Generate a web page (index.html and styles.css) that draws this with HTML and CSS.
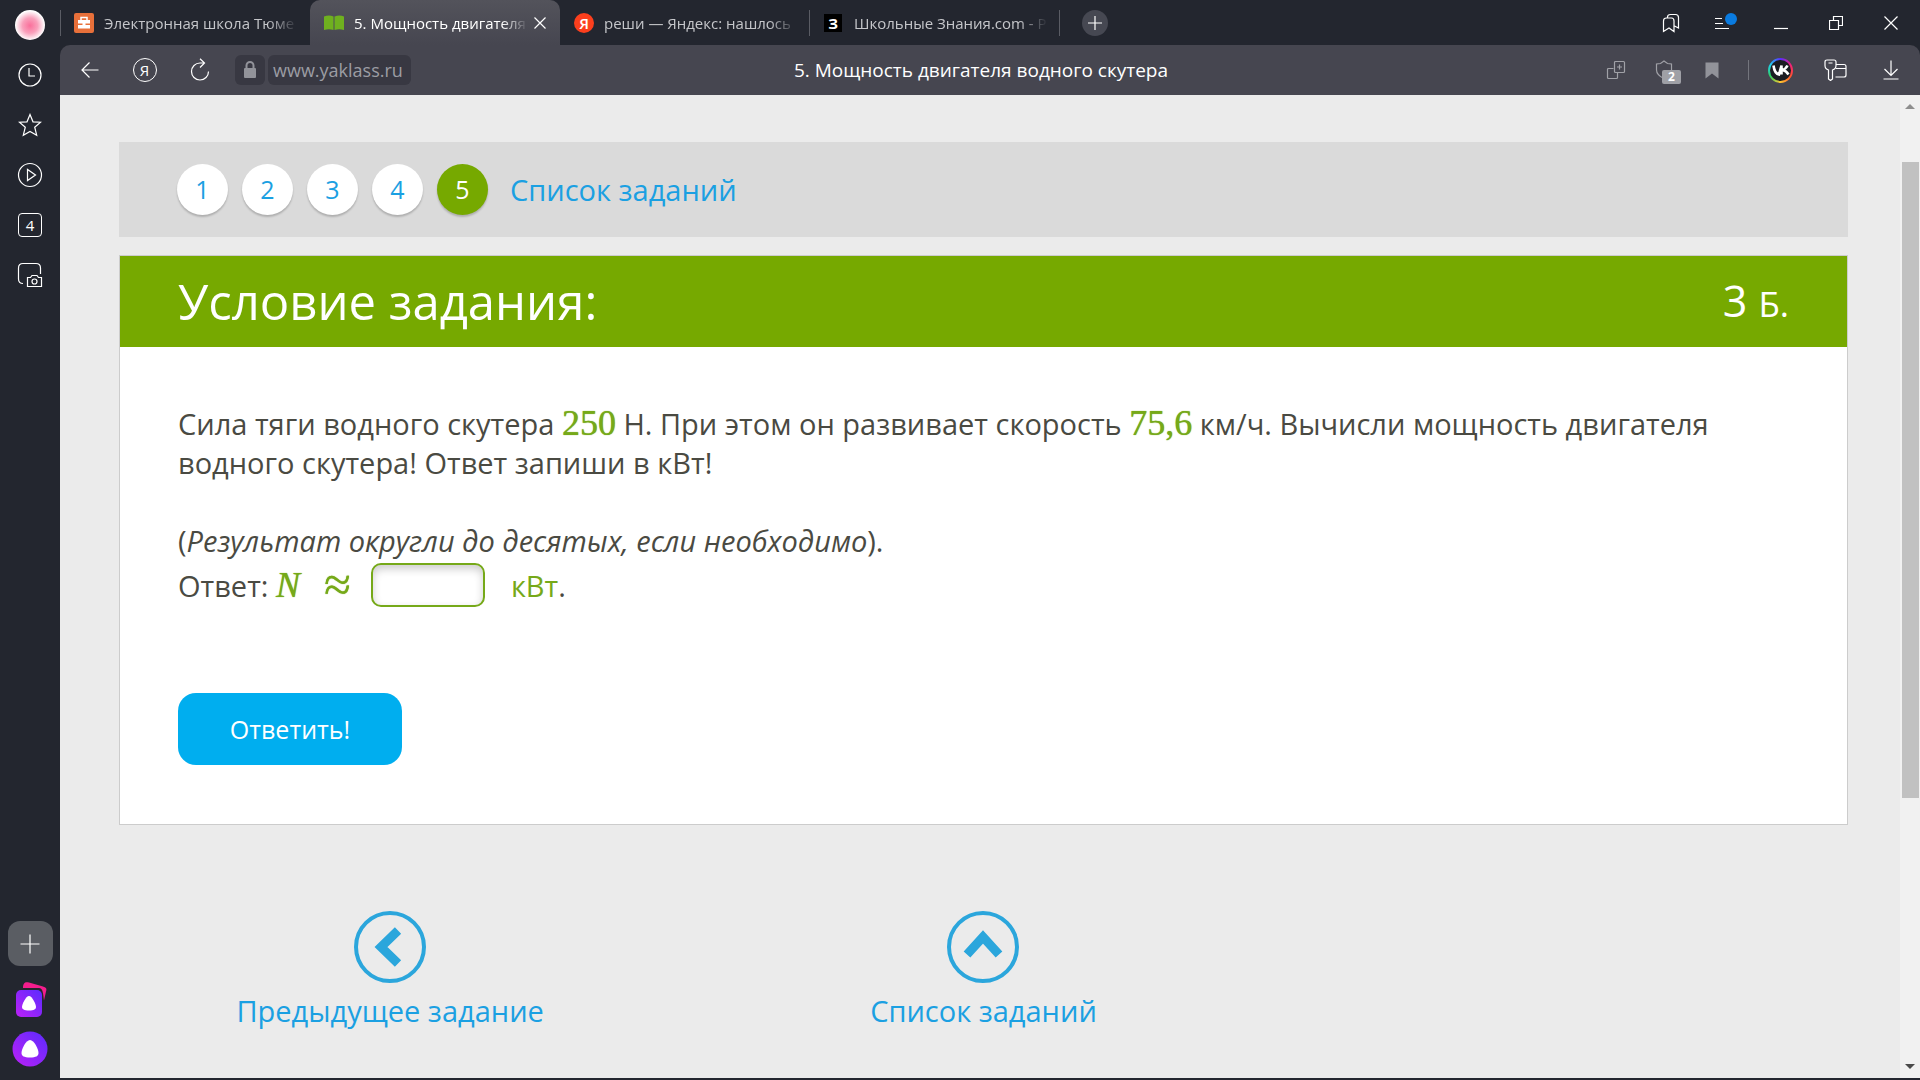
FILE: index.html
```html
<!DOCTYPE html>
<html lang="ru">
<head>
    <title>5. Мощность двигателя водного скутера</title>
    <meta charset="UTF-8">
    <meta name="viewport" content="width=device-width, initial-scale=1.0">
    <link rel="stylesheet" href="styles.css">
</head>
<body>
    <!-- боковая панель -->
    <aside class="sidebar">
        <button class="side-btn" aria-label="Профиль"><span class="avatar"></span></button>
        <button class="side-btn" aria-label="История">
            <svg width="24" height="24" viewBox="0 0 24 24"><circle cx="12" cy="12" r="11"/><path d="M11 5v8h6"/></svg>
        </button>
        <button class="side-btn" aria-label="Избранное">
            <svg width="24" height="24" viewBox="0 0 24 24"><path d="M12 1.5l3 7.3 7.6.4-5.9 5 2 8-6.7-3.7-6.7 3.7 2-8-5.9-5 7.6-.4z"/></svg>
        </button>
        <button class="side-btn" aria-label="Видео">
            <svg width="26" height="26" viewBox="0 0 26 26"><circle cx="13" cy="13" r="11.5"/><path d="M10.5 7.5v11l8-5.5z"/></svg>
        </button>
        <button class="side-btn" aria-label="Вкладки"><span class="tab-count">4</span></button>
        <button class="side-btn" aria-label="Снимок экрана">
            <svg width="26" height="26" viewBox="0 0 26 26"><path d="M6 21.5C3 21.5 1.500 20 1.500 17V6C1.500 3 3 1.500 6 1.500h13C22 1.500 23.500 3 23.500 6v6"/><path d="M10.500 15.500h3l1.500-2h5l1.500 2h3v9h-14z"/><circle cx="17.500" cy="19.500" r="2.500"/></svg>
        </button>
        <span class="spacer"></span>
        <button class="side-add" aria-label="Добавить">
            <svg width="20" height="20" viewBox="0 0 20 20"><path d="M10 .5v19M.5 10h19"/></svg>
        </button>
        <button class="side-btn" aria-label="Коллекции">
            <svg class="filled" width="34" height="38" viewBox="0 0 34 38">
                <defs><linearGradient id="violet" x1="1" y1="0" x2="0" y2="1"><stop offset="0" stop-color="#5a2bff"/><stop offset="1" stop-color="#bc20f5"/></linearGradient></defs>
                <path d="M10 8c0-5 2-6.500 6-5.500l14 4c3 1 4 2 3 5l-2 9c-1-8-1-12-5-12.500z" fill="#f51d8d"/>
                <rect x="3" y="10" width="26" height="27" rx="5" fill="url(#violet)"/>
                <path d="M16 16c3 0 7 8 7 11 0 2-2 3.500-7 3.500S9 29 9 27c0-3 4-11 7-11z" fill="#fff"/>
            </svg>
        </button>
        <button class="side-btn" aria-label="Алиса">
            <svg class="filled" width="36" height="36" viewBox="0 0 36 36"><circle cx="18" cy="18" r="17.500" fill="url(#violet)"/><path d="M18 9c4 0 8.500 9 8.500 13 0 3-2.500 4.500-8.500 4.500S9.500 25 9.500 22C9.500 18 14 9 18 9z" fill="#fff"/></svg>
        </button>
    </aside>

    <div class="browser">
        <!-- вкладки -->
        <header class="tabs">
            <a class="tab" href="#">
                <svg width="20" height="20" viewBox="0 0 20 20"><rect width="20" height="20" rx="2" fill="#e8703a"/><path d="M7 7V4.500h6V7" fill="none" stroke="#fff" stroke-width="1.500"/><path d="M4 7h12v3.500H4zM4 12h12v3.500H4zM8.500 10h3v3h-3z" fill="#fff"/></svg>
                <span class="tab-text">Электронная школа Тюме</span>
            </a>
            <a class="tab active" href="#">
                <svg width="20" height="16" viewBox="0 0 20 16"><path d="M0 1.500q5-2 9.500 0V15Q5 13.500 0 15zM10.500 1.500q5-2 9.500 0V15q-5-1.500-9.500 0z" fill="#6fb01f"/></svg>
                <span class="tab-text">5. Мощность двигателя</span>
                <svg class="tab-close" width="12" height="12" viewBox="0 0 12 12"><path d="M.5.5l11 11M11.500.5l-11 11"/></svg>
            </a>
            <a class="tab" href="#">
                <span class="fav-ya">Я</span>
                <span class="tab-text">реши — Яндекс: нашлось</span>
            </a>
            <a class="tab" href="#">
                <span class="fav-zn">З</span>
                <span class="tab-text">Школьные Знания.com - Р</span>
            </a>
            <button class="tab-new" aria-label="Новая вкладка">
                <svg width="14" height="14" viewBox="0 0 14 14"><path d="M7 0v14M0 7h14"/></svg>
            </button>
            <span class="spacer"></span>
            <button class="win-btn" aria-label="Закладки">
                <svg width="18" height="20" viewBox="0 0 18 20"><path d="M1.500 18.500V8q0-3 3-3h5q2.500 0 2.500 3v10.500l-5-3.500zM5.500 5V4q0-2.500 3-2.500h5q3 0 3 3V15l-4-2"/></svg>
            </button>
            <button class="win-btn" aria-label="Меню">
                <svg width="24" height="22" viewBox="0 0 24 22"><path d="M1 6.500h7M1 11.500h8M1 16.500h14"/><circle cx="17" cy="7" r="6" fill="#0a7be0" stroke="none"/></svg>
            </button>
            <button class="win-btn" aria-label="Свернуть">
                <svg width="14" height="14" viewBox="0 0 14 14"><path d="M0 12.500h14"/></svg>
            </button>
            <button class="win-btn" aria-label="Развернуть">
                <svg width="14" height="14" viewBox="0 0 14 14"><path d="M.5 4.500h9v9h-9zM4.500 4.500v-4h9v9h-4"/></svg>
            </button>
            <button class="win-btn" aria-label="Закрыть">
                <svg width="14" height="14" viewBox="0 0 14 14"><path d="M.5.5l13 13M13.500.5l-13 13"/></svg>
            </button>
        </header>

        <!-- адресная строка -->
        <div class="toolbar">
            <div class="tools-left">
                <button class="tool-btn" aria-label="Назад">
                    <svg width="18" height="16" viewBox="0 0 18 16"><path d="M17.500 8H1M8.500.5L1 8l7.500 7.500"/></svg>
                </button>
                <button class="tool-btn" aria-label="Яндекс"><span class="ya-round">Я</span></button>
                <button class="tool-btn" aria-label="Обновить">
                    <svg width="20" height="24" viewBox="0 0 20 24"><path d="M13.500 5H10a8.500 8.500 0 1 0 8.500 8.500M10 .8L14.500 5 10 9.500"/></svg>
                </button>
                <span class="lock">
                    <svg width="14" height="18" viewBox="0 0 14 18"><path class="lock-arc" d="M3.500 8V4.500a3.500 3.500 0 0 1 7 0V8"/><rect x="1" y="7" width="12" height="10" rx="1" fill="#92939a"/></svg>
                </span>
                <a class="url" href="#">www.yaklass.ru</a>
            </div>
            <div class="page-title">5. Мощность двигателя водного скутера</div>
            <div class="tools-right">
                <button class="ext-btn dim" aria-label="Расширения">
                    <svg width="20" height="20" viewBox="0 0 20 20"><path d="M7.500 8.500h-5q-1 0-1 1v8q0 1 1 1h8q1 0 1-1v-5"/><rect x="8.500" y="1.500" width="10" height="11" rx="1"/><path d="M13.500 4.500v5M11 7h5"/></svg>
                </button>
                <button class="ext-btn dim" aria-label="Защита">
                    <svg width="18" height="20" viewBox="0 0 18 20"><path d="M9 1l3.500 2.500 4 .5v6q0 5-7.500 8.500Q1.500 15 1.500 10V4l4-.5z"/></svg>
                    <span class="badge">2</span>
                </button>
                <button class="ext-btn dim" aria-label="В закладки">
                    <svg width="14" height="17" viewBox="0 0 14 17"><path d="M.5.5h13v16l-6.500-5-6.500 5z" fill="#92939a" stroke="none"/></svg>
                </button>
                <span class="divider"></span>
                <button class="tool-btn" aria-label="ВКонтакте"><span class="vk"><svg width="18" height="12" viewBox="0 0 18 12"><path d="M1.500 1.500q1 8 5.500 9L9.500 1.500V10.500M10 6q3.500-.5 5.500-4.500M10.500 6q3.500.5 6 4.500"/></svg></span></button>
                <button class="tool-btn" aria-label="Пароли">
                    <svg width="23" height="22" viewBox="0 0 23 22"><path d="M4.500 11Q1 10 1 6.500V3q0-2 2-2h7q2 0 2 2v3.500Q12 10 8.500 11v9l-2 1.500-2-1.500zM4.500 4h4M12 5.500h8q2 0 2 2V16q0 2-2 2h-8.500M12 9.500h10"/></svg>
                </button>
                <button class="tool-btn" aria-label="Загрузки">
                    <svg width="16" height="20" viewBox="0 0 16 20"><path d="M8 .5v15M1.500 9L8 15.500 14.500 9M.5 19h15"/></svg>
                </button>
            </div>
        </div>

        <!-- страница -->
        <div class="viewport">
            <main class="page">
                <nav class="task-nav">
                    <a class="num" href="#">1</a>
                    <a class="num" href="#">2</a>
                    <a class="num" href="#">3</a>
                    <a class="num" href="#">4</a>
                    <a class="num current" href="#">5</a>
                    <a class="list-link" href="#">Список заданий</a>
                </nav>

                <section class="task">
                    <div class="task-head">
                        <h1>Условие задания:</h1>
                        <div class="points">3 <small>Б.</small></div>
                    </div>
                    <form class="task-body">
                        <p>Сила тяги водного скутера <span class="math">250</span> Н. При этом он развивает скорость <span class="math">75,6</span> км/ч. Вычисли мощность двигателя водного скутера! Ответ запиши в кВт!</p>
                        <p>(<em>Результат округли до десятых, если необходимо</em>).</p>
                        <div class="answer">
                            <label for="answer">Ответ: <span class="math"><i>N</i></span></label>
                            <span class="math approx">≈</span>
                            <input type="text" id="answer">
                            <span><span class="unit">кВт</span>.</span>
                        </div>
                        <button class="submit" type="button">Ответить!</button>
                    </form>
                </section>

                <nav class="bottom-nav">
                    <a class="prev" href="#">
                        <svg width="72" height="72" viewBox="0 0 72 72"><circle cx="36" cy="36" r="34"/><path class="arrow" d="M44 19.500L27 36l17 16.500"/></svg>
                        Предыдущее задание
                    </a>
                    <a href="#">
                        <svg width="72" height="72" viewBox="0 0 72 72"><circle cx="36" cy="36" r="34"/><path class="arrow" d="M20 43.500L36 26l16 17.500"/></svg>
                        Список заданий
                    </a>
                </nav>
            </main>
            <div class="scrollbar">
                <svg width="10" height="5" viewBox="0 0 10 5"><path d="M0 5l5-5 5 5z" fill="#8f8f8f"/></svg>
                <div class="track"><div class="thumb"></div></div>
                <svg width="10" height="5" viewBox="0 0 10 5"><path d="M0 0l5 5 5-5z" fill="#4a4a4a"/></svg>
            </div>
        </div>
    </div>
</body>
</html>
```
FILE: styles.css
```css
* {
    box-sizing: border-box;
}
body {
    margin: 0;
    height: 100vh;
    display: flex;
    background: #23262f;
    font-family: 'Open Sans', 'Noto Sans', sans-serif;
    overflow: hidden;
}
button {
    border: none;
    padding: 0;
    background: none;
    color: inherit;
    font-family: inherit;
    cursor: pointer;
}
a {
    color: inherit;
    text-decoration: none;
}
svg {
    flex: none;
    fill: none;
    stroke: #fff;
    stroke-width: 1.2;
}
.filled, .tab > svg:first-child, .lock svg, .scrollbar svg {
    stroke: none;
}
.spacer {
    flex: 1;
}

/* боковая панель */
.sidebar {
    width: 60px;
    flex: none;
    display: flex;
    flex-direction: column;
    align-items: center;
    padding-bottom: 6px;
    color: #fff;
}
.side-btn {
    width: 60px;
    height: 50px;
    display: flex;
    align-items: center;
    justify-content: center;
}
.avatar {
    width: 30px;
    height: 30px;
    border-radius: 50%;
    background: radial-gradient(circle at 50% 52%, #fa6f9b 0%, #f9a0bb 35%, #fff 68%);
}
.tab-count {
    width: 24px;
    height: 24px;
    border: 1px solid #fff;
    border-radius: 4px;
    font-size: 15px;
    line-height: 22px;
}
.side-add {
    width: 45px;
    height: 45px;
    margin-bottom: 8px;
    border-radius: 12px;
    background: #5a5d63;
    display: flex;
    align-items: center;
    justify-content: center;
}

/* вкладки */
.browser {
    flex: 1;
    min-width: 0;
    display: flex;
    flex-direction: column;
}
.tabs {
    height: 45px;
    flex: none;
    display: flex;
    align-items: center;
    padding-right: 2px;
    color: #c5c6ca;
}
.tab {
    width: 250px;
    height: 45px;
    display: flex;
    align-items: center;
    gap: 10px;
    padding: 0 12px 0 14px;
    font-size: 15px;
    background: linear-gradient(#5a5c64, #5a5c64) right center / 1px 26px no-repeat;
}
.tab:first-child {
    background-position: left center;
}
.tab.active {
    background: linear-gradient(#53535b, #464650);
    border-radius: 10px 10px 0 0;
    color: #fff;
}
.tab-text {
    flex: 1;
    min-width: 0;
    overflow: hidden;
    white-space: nowrap;
    mask-image: linear-gradient(to right, #000 85%, transparent);
}
.tab.active .tab-text {
    margin-right: -4px;
}
.tab-close {
    margin-right: 2px;
}
.fav-ya {
    width: 20px;
    height: 20px;
    border-radius: 50%;
    background: #fc3f1d;
    color: #fff;
    font-size: 15px;
    font-weight: 600;
    line-height: 20px;
    text-align: center;
}
.fav-zn {
    width: 18px;
    height: 18px;
    margin-right: 2px;
    background: #000;
    color: #fff;
    font-size: 15px;
    font-weight: 700;
    line-height: 18px;
    text-align: center;
}
.tab-new {
    width: 26px;
    height: 26px;
    margin-left: 22px;
    border-radius: 50%;
    background: #464852;
    display: flex;
    align-items: center;
    justify-content: center;
}
.win-btn, .tool-btn {
    width: 55px;
    height: 45px;
    display: flex;
    align-items: center;
    justify-content: center;
}

/* адресная строка */
.toolbar {
    height: 50px;
    flex: none;
    display: grid;
    grid-template-columns: 1fr auto 1fr;
    align-items: center;
    background: #464650;
    border-radius: 10px 10px 0 0;
    color: #fff;
}
.tools-left, .tools-right {
    display: flex;
    align-items: center;
}
.tools-left {
    padding-left: 2px;
    margin-right: 18px;
}
.tools-right {
    justify-content: flex-end;
    padding-right: 2px;
}
.ya-round {
    width: 24px;
    height: 24px;
    border: 1px solid #fff;
    border-radius: 50%;
    font-size: 15px;
    line-height: 22px;
}
.lock {
    width: 30px;
    height: 30px;
    margin: 0 3px 0 8px;
    border-radius: 6px;
    background: #383842;
    display: flex;
    align-items: center;
    justify-content: center;
}
.lock-arc {
    stroke: #92939a;
    stroke-width: 2;
}
.url {
    height: 30px;
    padding: 0 8px 0 5px;
    border-radius: 6px;
    background: #383842;
    color: #9c9da4;
    font-size: 18px;
    line-height: 30px;
}
.page-title {
    margin-left: -18px;
    font-size: 19px;
    white-space: nowrap;
}
.ext-btn {
    position: relative;
    width: 48px;
    height: 45px;
    display: flex;
    align-items: center;
    justify-content: center;
}
.dim svg {
    stroke: #a0a1a7;
}
.badge {
    position: absolute;
    left: 22px;
    top: 22px;
    width: 19px;
    height: 14px;
    border-radius: 2px;
    background: #9fa0a6;
    font-size: 12px;
    font-weight: 700;
    line-height: 14px;
}
.divider {
    width: 1px;
    height: 20px;
    margin: 0 4px 0 12px;
    background: #74757d;
}
.vk {
    width: 25px;
    height: 25px;
    border: 2px solid transparent;
    border-radius: 50%;
    background: linear-gradient(#1b1c22, #1b1c22) padding-box,
        conic-gradient(#5a2bff, #f0207a, #ff5530, #ffc530, #30d060, #20d0f0, #5a2bff) border-box;
    display: flex;
    align-items: center;
    justify-content: center;
}
.vk svg {
    stroke-width: 2.6;
}

/* страница */
.viewport {
    flex: 1;
    min-height: 0;
    display: flex;
    margin-bottom: 2px;
    background: #ebebeb;
}
.page {
    flex: 1;
    min-width: 0;
    padding: 47px 52px 0 59px;
    color: #4a4a42;
    font-size: 29px;
    line-height: 39px;
}
.task-nav {
    display: flex;
    align-items: center;
    gap: 14px;
    height: 95px;
    padding: 0 58px;
    background: #dadada;
    color: #1ba0e2;
}
.num {
    width: 51px;
    height: 51px;
    border-radius: 50%;
    background: #fff;
    box-shadow: 0 2px 2px rgba(0, 0, 0, 0.2);
    font-size: 25px;
    line-height: 51px;
    text-align: center;
}
.num.current {
    background: #76a900;
    color: #fff;
}
.list-link {
    margin-left: 8px;
}
.task {
    margin-top: 18px;
    border: 1px solid #ccc;
    background: #fff;
}
.task-head {
    display: flex;
    align-items: center;
    justify-content: space-between;
    height: 91px;
    padding: 0 58px;
    background: #76a900;
    color: #fff;
}
h1 {
    margin: 0;
    font-size: 49px;
    font-weight: 400;
}
.points {
    font-size: 43px;
}
.points small {
    font-size: 35px;
}
.task-body {
    padding: 57px 58px 59px;
}
p {
    margin: 0 0 39px;
}
.math {
    color: #76a919;
    font-family: 'Liberation Serif', serif;
    font-size: 36px;
    line-height: 1;
    text-shadow: 0 0 1px #76a919;
}
.answer {
    display: flex;
    align-items: center;
    margin: -36px 0 86px;
}
.approx {
    margin: 0 20px 0 24px;
    font-size: 49px;
    line-height: 36px;
}
.answer input {
    width: 114px;
    height: 44px;
    margin-right: 26px;
    padding: 0 10px;
    border: 2px solid #76a919;
    border-radius: 10px;
    box-shadow: inset 0 4px 8px rgba(0, 0, 0, 0.2);
    background: #fff;
    font: inherit;
}
.unit {
    color: #76a919;
}
.submit {
    width: 224px;
    height: 72px;
    border-radius: 18px;
    background: #00aeef;
    color: #fff;
    font-size: 25px;
}
.bottom-nav {
    display: grid;
    grid-template-columns: 1fr 1fr 1fr;
    margin-top: 86px;
    color: #1ba0e2;
}
.bottom-nav a {
    display: flex;
    flex-direction: column;
    align-items: center;
    gap: 8px;
}
.bottom-nav .prev {
    padding-right: 34px;
}
.bottom-nav svg {
    stroke: #2ba6dc;
    stroke-width: 4;
}
.bottom-nav .arrow {
    stroke-width: 9;
}
.scrollbar {
    width: 20px;
    flex: none;
    display: flex;
    flex-direction: column;
    align-items: center;
    padding: 9px 0;
    background: #f1f1f1;
}
.track {
    flex: 1;
    width: 17px;
    padding-top: 53px;
}
.thumb {
    height: 70.5%;
    background: #c1c1c1;
}
```
